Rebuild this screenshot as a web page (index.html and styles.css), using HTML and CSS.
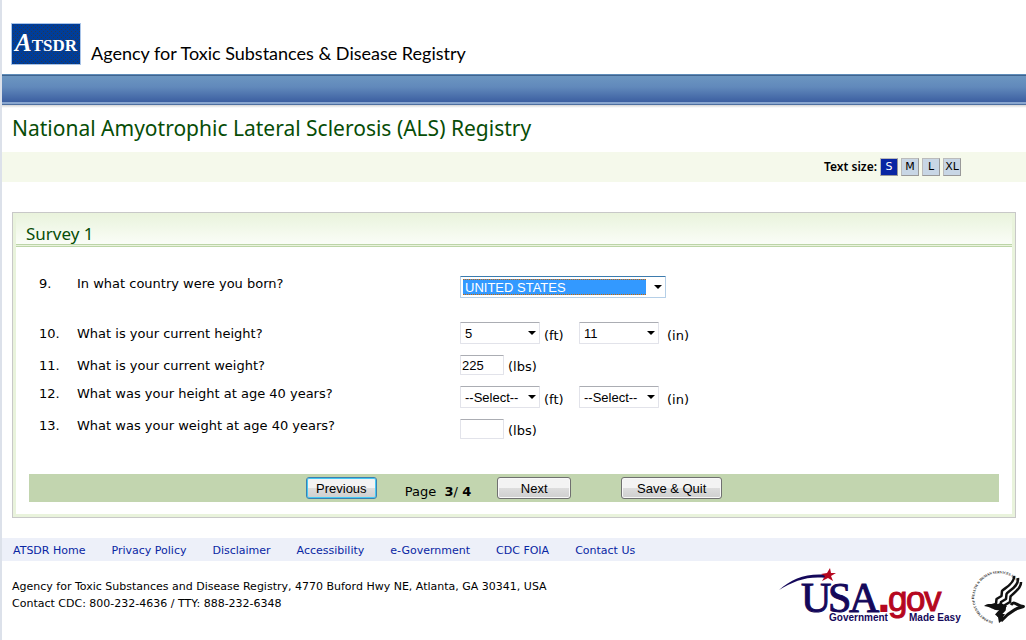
FILE: index.html
```
<!DOCTYPE html>
<html lang="en">
<head>
    <meta charset="UTF-8">
    <title>National ALS Registry - Survey 1</title>
    <link rel="stylesheet" href="styles.css">
</head>
<body>
    <header>
        <svg class="logo" width="70" height="42" viewBox="0 0 70 42" role="img" aria-label="ATSDR">
            <defs>
                <pattern id="dots" width="4" height="4" patternUnits="userSpaceOnUse">
                    <rect width="4" height="4" fill="#003d99"/>
                    <rect width="1" height="1" fill="#29384f"/>
                    <rect x="2" y="2" width="1" height="1" fill="#29384f"/>
                </pattern>
            </defs>
            <rect width="70" height="42" fill="#a9c4e8"/>
            <rect x="1" y="1" width="68" height="40" fill="url(#dots)" shape-rendering="crispEdges"/>
            <text x="4" y="28" class="logo-text"><tspan class="logo-a">A</tspan><tspan>TSDR</tspan></text>
        </svg>
        <div class="agency">Agency for Toxic Substances &amp; Disease Registry</div>
    </header>
    <div class="bar"></div>

    <h1>National Amyotrophic Lateral Sclerosis (ALS) Registry</h1>

    <div class="textsize">
        <span>Text size:</span>
        <button type="button" class="active">S</button>
        <button type="button">M</button>
        <button type="button">L</button>
        <button type="button">XL</button>
    </div>

    <form class="survey">
        <h2>Survey 1</h2>
        <div class="questions">
            <div class="row first">
                <span>9.</span>
                <label for="country">In what country were you born?</label>
                <div class="answer">
                    <select id="country" class="country"><option>UNITED STATES</option></select>
                </div>
            </div>
            <div class="row lower">
                <span>10.</span>
                <label for="feet">What is your current height?</label>
                <div class="answer">
                    <select id="feet"><option>5</option></select>
                    <label class="unit feet" for="feet">(ft)</label>
                    <select id="inches"><option>11</option></select>
                    <label class="unit inches" for="inches">(in)</label>
                </div>
            </div>
            <div class="row lower">
                <span>11.</span>
                <label for="weight">What is your current weight?</label>
                <div class="answer">
                    <input type="text" id="weight" value="225">
                    <label class="unit lbs" for="weight">(lbs)</label>
                </div>
            </div>
            <div class="row">
                <span>12.</span>
                <label for="feet40">What was your height at age 40 years?</label>
                <div class="answer">
                    <select id="feet40"><option>--Select--</option></select>
                    <label class="unit feet" for="feet40">(ft)</label>
                    <select id="inches40"><option>--Select--</option></select>
                    <label class="unit inches" for="inches40">(in)</label>
                </div>
            </div>
            <div class="row">
                <span>13.</span>
                <label for="weight40">What was your weight at age 40 years?</label>
                <div class="answer">
                    <input type="text" id="weight40">
                    <label class="unit lbs" for="weight40">(lbs)</label>
                </div>
            </div>
        </div>
        <div class="pager">
            <button type="button" class="previous">Previous</button>
            <div class="page">Page&nbsp; <b>3</b>/ <b>4</b></div>
            <button type="button" class="next">Next</button>
            <button type="button" class="save">Save &amp; Quit</button>
        </div>
    </form>

    <nav>
        <a href="#">ATSDR Home</a>
        <a href="#">Privacy Policy</a>
        <a href="#">Disclaimer</a>
        <a href="#">Accessibility</a>
        <a href="#">e-Government</a>
        <a href="#">CDC FOIA</a>
        <a href="#">Contact Us</a>
    </nav>

    <footer>
        <p>Agency for Toxic Substances and Disease Registry, 4770 Buford Hwy NE, Atlanta, GA 30341, USA<br>
        Contact CDC: 800-232-4636 / TTY: 888-232-6348</p>
        <div class="seals">
            <svg width="184" height="60" viewBox="0 0 184 60" role="img" aria-label="USA.gov, Government Made Easy">
                <path d="M-1 22 C12 11 26 5 47 7 L46 10 C27 8 14 13 -1 22Z" fill="#14085a"/>
                <path d="M50 0 L51 5 L56 5 L51 8 L53 13 L48 10 L42 13 L45 8 L41 6 L47 5Z" fill="#b5071f"/>
                <text x="21 48 69" y="44" class="usa">USA</text>
                <text x="99 108 126 144" y="43" class="usa-gov"><tspan class="usa-dot">.</tspan>gov</text>
                <text x="49" y="53" class="usa-small">Government</text>
                <text x="129" y="53" class="usa-small">Made Easy</text>
            </svg>
            <svg class="hhs" width="56" height="60" viewBox="0 0 112 120" role="img" aria-label="Department of Health and Human Services USA">
                <defs>
                    <path id="ring" d="M50 107 A49 49 0 1 1 106 38"/>
                </defs>
                <text class="ring-text"><textPath href="#ring">DEPARTMENT OF HEALTH &amp; HUMAN SERVICES·USA</textPath></text>
                <g fill="none" stroke="#111" stroke-width="5" stroke-linejoin="round">
                    <path d="M92 16 C94 32 70 42 68 46 L67 56 L57 62 L56 72 L46 75"/>
                    <path d="M100 20 C102 38 80 46 77 52 L76 62 L66 68 L64 78"/>
                    <path d="M106 28 C107 42 88 52 85 57 L84 68 L74 74 L73 84 L60 98"/>
                    <path d="M86 74 C92 64 98 76 111 77 L98 81 C90 86 82 88 66 106" stroke-width="6"/>
                </g>
                <path d="M32 76 C42 68 52 76 66 70 L78 76 L66 92 L74 92 L70 98 L76 99 L62 110 L60 98 L54 93 L62 84 C52 86 48 78 32 76Z" fill="#111"/>
            </svg>
        </div>
    </footer>
</body>
</html>
```
FILE: styles.css
```
*{box-sizing: border-box;}
body{
    margin: 0;
    min-height: 100vh;
    font-family: Verdana, "DejaVu Sans", sans-serif;
    font-size: 13px;
    line-height: 16px;
    color: black;
    background-color: white;
    border-left: 2px solid #dce1ea;
}
header{
    display: flex;
    align-items: flex-end;
    gap: 10px;
    height: 74px;
    padding: 0 9px 9px 9px;
}
.logo-text{
    font-family: Optima, "Liberation Serif", serif;
    font-weight: bold;
    font-size: 17px;
    fill: white;
}
.logo-a{
    font-size: 25px;
    font-style: italic;
}
.agency{
    font-family: "Century Gothic", Lato, sans-serif;
    font-size: 18px;
    line-height: 24px;
}
.bar{
    height: 34px;
    border-top: 1px solid #5f8cb8;
    background: linear-gradient(#40648f 0 1px, #6c96c1 1px, #6189bb 12px, #3c5fa1 27px, #89a6cf 27px 29px, #4e6f9f 29px 30px, #d4d4d4 30px, white 33px);
}
h1{
    margin: 0;
    padding: 6px 10px 16px 10px;
    font-family: "Trebuchet MS", "Noto Sans", sans-serif;
    font-size: 21px;
    line-height: 28px;
    height: 44px;
    font-weight: normal;
    color: #074d07;
}
.textsize{
    display: flex;
    justify-content: flex-end;
    align-items: center;
    gap: 3px;
    height: 30px;
    padding-right: 65px;
    background-color: #f5f9eb;
    font-family: "Trebuchet MS", "Noto Sans", sans-serif;
    font-size: 12px;
    font-weight: 600;
}
.textsize button{
    width: 18px;
    height: 18px;
    padding: 0;
    font-family: Verdana, "DejaVu Sans", sans-serif;
    font-size: 11px;
    line-height: 14px;
    color: black;
    background-color: #c8d6e5;
    border: 1px solid #bbb;
    border-right-color: #999;
    border-bottom-color: #999;
}
.textsize .active{
    color: white;
    background-color: #0926a3;
}

.survey{
    margin: 30px 10px 20px 10px;
    padding: 0 3px 15px 3px;
    border: 1px solid #c8c8c8;
    box-shadow: inset 0 0 0 3px #e9f3dc;
}
h2{
    margin: 0;
    height: 34px;
    padding: 10px 10px 0 10px;
    font-family: "Trebuchet MS", "Noto Sans", sans-serif;
    font-size: 17px;
    line-height: 22px;
    font-weight: normal;
    color: #074d07;
    background: linear-gradient(#e9f3dc, #fafdf7);
    border-bottom: 3px double #bcd5a8;
}
.questions{
    padding: 29px 23px 0 23px;
}
.row{
    display: grid;
    grid-template-columns: 38px 383px 1fr;
    height: 32px;
}
.first{
    height: 46px;
}
.lower > span, .lower > label{
    padding-top: 4px;
}
.answer{
    display: flex;
    align-items: flex-start;
}
select, input{
    font-family: Arial, "Liberation Sans", sans-serif;
    font-size: 13px;
    color: black;
    background-color: white;
    border: 1px solid #e2e3ea;
    border-top-color: #abadb3;
    border-radius: 1px;
}
select{
    appearance: none;
    width: 80px;
    height: 22px;
    padding: 0 0 0 4px;
    background-image: url("data:image/svg+xml,%3Csvg xmlns='http://www.w3.org/2000/svg' width='8' height='4'%3E%3Cpath d='M0 0h8L4 4z'/%3E%3C/svg%3E");
    background-repeat: no-repeat;
    background-position: right 3px center;
}
.country{
    width: 206px;
    color: white;
    border-color: #b5cfe7;
    border-top-color: #3d7bad;
    background-image:
        url("data:image/svg+xml,%3Csvg xmlns='http://www.w3.org/2000/svg' width='8' height='4'%3E%3Cpath d='M0 0h8L4 4z'/%3E%3C/svg%3E"),
        repeating-linear-gradient(90deg, #cc6600 0 1px, #3399ff 1px 2px),
        repeating-linear-gradient(90deg, #cc6600 0 1px, #3399ff 1px 2px),
        linear-gradient(#3399ff, #3399ff);
    background-size: 8px 4px, 183px 1px, 183px 1px, 183px 16px;
    background-position: right 3px center, 2px 2px, 2px 17px, 2px 2px;
}
input{
    width: 44px;
    height: 20px;
    margin-top: 1px;
    padding: 0 1px;
}
.unit{
    padding: 6px 0 0 4px;
}
.feet{
    width: 39px;
}
.inches{
    padding-left: 8px;
}
.lbs{
    padding-top: 5px;
}
.pager{
    display: flex;
    justify-content: center;
    height: 28px;
    margin: 24px 13px 0 13px;
    padding-top: 3px;
    background-color: #c2d5af;
}
.pager button{
    height: 22px;
    padding: 0;
    font-family: Arial, "Liberation Sans", sans-serif;
    font-size: 13px;
    color: black;
    background: linear-gradient(#f3f3f3 0 50%, #dddddd 50%, #cfcfcf);
    border: 1px solid #707070;
    border-radius: 3px;
    box-shadow: inset 0 0 0 1px #f8f8f8;
}
.pager .previous{
    width: 71px;
    border-color: #3c7fb1;
    box-shadow: inset 0 0 0 1px #45c8f2;
}
.page{
    padding: 7px 26px 0 28px;
}
.next{
    width: 74px;
    margin-right: 50px;
}
.save{
    width: 101px;
}

nav{
    display: flex;
    gap: 26px;
    height: 23px;
    padding: 5px 11px 0 11px;
    background-color: #edf0f9;
    font-size: 11px;
}
nav a{
    color: #0926a3;
    text-decoration: none;
}
footer{
    display: flex;
    justify-content: space-between;
    padding: 7px 2px 0 10px;
    font-size: 11px;
    line-height: 17px;
}
footer p{
    margin: 10px 0 0 0;
}
.seals{
    display: flex;
    gap: 4px;
}
.seals svg{
    overflow: visible;
}
.usa{
    font-family: "Times New Roman", "Liberation Serif", serif;
    font-size: 42px;
    fill: #14085a;
    stroke: #14085a;
}
.usa-gov{
    font-family: Arial, "Liberation Sans", sans-serif;
    font-size: 35px;
    fill: #b5071f;
    stroke: #b5071f;
}
.usa-dot{
    font-weight: bold;
    stroke-width: 2px;
}
.usa-small{
    font-family: Arial, "Liberation Sans", sans-serif;
    font-weight: bold;
    font-size: 10px;
    fill: #14085a;
}
.ring-text{
    font-family: "Times New Roman", "Liberation Serif", serif;
    font-weight: bold;
    font-size: 7px;
    fill: #222;
    text-rendering: geometricPrecision;
}
```
